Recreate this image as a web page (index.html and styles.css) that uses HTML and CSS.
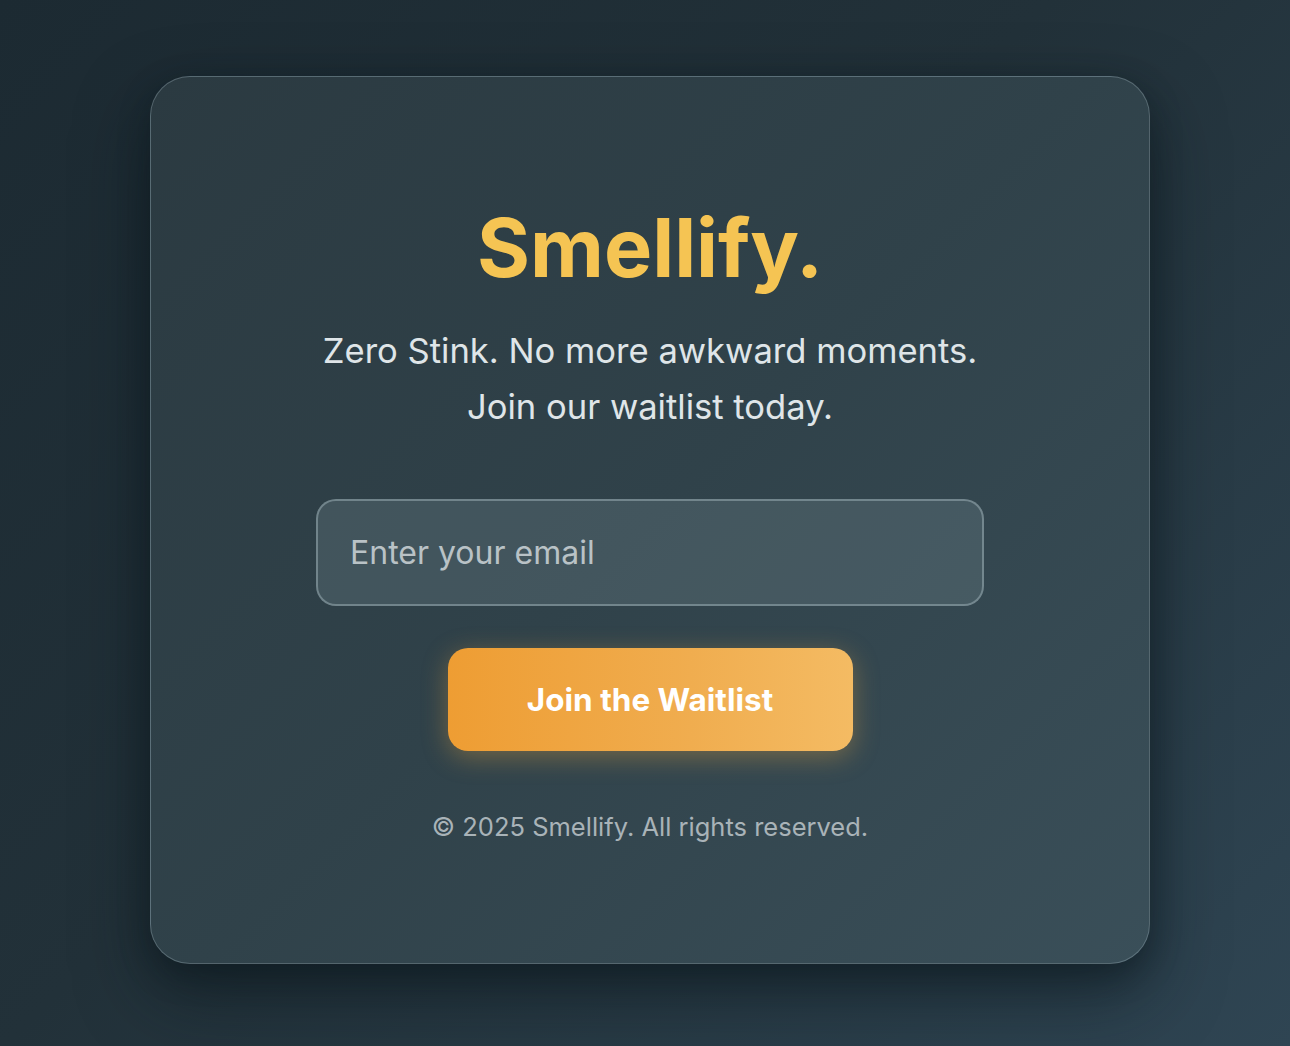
FILE: index.html
```html
<!DOCTYPE html>
<html lang="en">
<head>
<meta charset="utf-8">
<title>Smellify</title>
<link rel="stylesheet" href="styles.css">
</head>
<body>
<main class="card">
  <h1 class="brand">Smellify.</h1>
  <p class="tagline">Zero Stink. No more awkward moments.<br>Join our waitlist today.</p>
  <form class="signup">
    <input class="email" type="email" placeholder="Enter your email">
    <button class="cta" type="button">Join the Waitlist</button>
  </form>
  <p class="footer">© 2025 Smellify. All rights reserved.</p>
</main>
</body>
</html>
```
FILE: styles.css
```css
html, body {
  margin: 0;
  height: 100%;
}
body {
  font-family: Inter, "Noto Sans", sans-serif;
  background: linear-gradient(135deg, #1c2a32 0%, #223139 45%, #2f4553 100%);
  display: flex;
  align-items: center;
  justify-content: center;
  overflow: hidden;
}
.card {
  box-sizing: border-box;
  width: 1000px;
  height: 888px;
  margin-top: -7px;
  margin-left: 10px;
  border-radius: 40px;
  border: 1px solid rgba(160, 180, 190, 0.35);
  background: linear-gradient(135deg, #2b3a41 0%, #30424a 50%, #3a4f59 100%);
  box-shadow: 0 30px 70px rgba(10, 20, 25, 0.55), 0 10px 30px rgba(10, 20, 25, 0.35);
  display: flex;
  flex-direction: column;
  align-items: center;
  padding-top: 123px;
}
.brand {
  margin: 0;
  font-size: 81px;
  line-height: 96px;
  font-weight: 700;
  color: #f5c453;
}
.tagline {
  margin: 26px 0 0;
  font-size: 34.6px;
  line-height: 56px;
  color: #dfe5e8;
  text-align: center;
}
.signup {
  margin-top: 65px;
  display: flex;
  flex-direction: column;
  align-items: center;
}
.email {
  box-sizing: border-box;
  width: 668px;
  height: 107px;
  border-radius: 20px;
  border: 2px solid rgba(170, 190, 198, 0.45);
  background: rgba(120, 140, 146, 0.28);
  padding: 0 32px;
  font-family: inherit;
  font-size: 32px;
  color: #e6ecee;
  outline: none;
}
.email::placeholder {
  color: #b9c2c6;
}
.cta {
  margin-top: 42px;
  width: 405px;
  height: 103px;
  border: none;
  border-radius: 20px;
  background: linear-gradient(90deg, #ee9d33 0%, #f0ad4f 60%, #f4bb63 100%);
  box-shadow: 0 6px 26px rgba(240, 170, 60, 0.35);
  color: #ffffff;
  font-family: inherit;
  font-size: 31.5px;
  font-weight: 700;
  cursor: pointer;
}
.footer {
  margin: 58px 0 0;
  font-size: 25.5px;
  line-height: 36px;
  color: #a9b3b8;
}
```
